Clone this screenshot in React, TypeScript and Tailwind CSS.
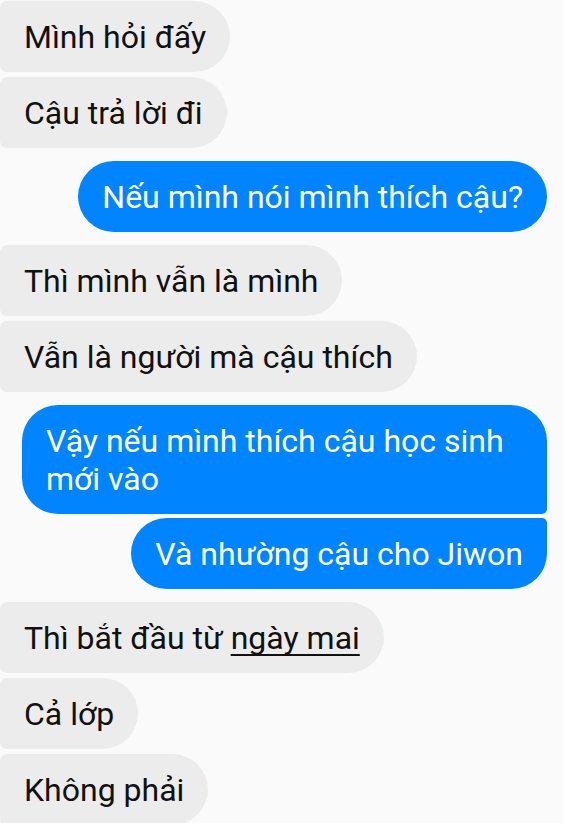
import React from "react";

const Gray = ({ children, mt }: { children: React.ReactNode; mt: string }) => (
  <div className={`flex justify-start ${mt}`}>
    <div className="bg-[#ececec] text-[#111] pl-6 pr-6 py-[16.5px] rounded-l-[7px] rounded-r-[36px]">
      {children}
    </div>
  </div>
);

const Blue = ({ children, mt, cls }: { children: React.ReactNode; mt: string; cls: string }) => (
  <div className={`flex justify-end pr-4 ${mt}`}>
    <div className={`bg-[#0084ff] text-white px-6 py-[16.5px] max-w-[525px] ${cls}`}>{children}</div>
  </div>
);

export default function App() {
  return (
    <div
      className="w-[563px] h-[823px] overflow-hidden bg-[#fafafa] pt-px text-[32px] leading-[38px]"
      style={{ fontFamily: "Roboto, 'Noto Sans', sans-serif" }}
    >
      <Gray mt="mt-0">Mình hỏi đấy</Gray>
      <Gray mt="mt-[5px]">Cậu trả lời đi</Gray>
      <Blue mt="mt-[13px]" cls="rounded-[36px]">Nếu mình nói mình thích cậu?</Blue>
      <Gray mt="mt-[13px]">Thì mình vẫn là mình</Gray>
      <Gray mt="mt-[5px]">Vẫn là người mà cậu thích</Gray>
      <Blue mt="mt-[13px]" cls="rounded-[36px] rounded-br-[5px]">Vậy nếu mình thích cậu học sinh mới vào</Blue>
      <Blue mt="mt-[4px]" cls="rounded-[36px] rounded-tr-[5px]">Và nhường cậu cho Jiwon</Blue>
      <Gray mt="mt-[13px]">
        Thì bắt đầu từ{" "}
        <span className="underline decoration-[2px] underline-offset-[5px] [text-decoration-skip-ink:none]">ngày mai</span>
      </Gray>
      <Gray mt="mt-[5px]">Cả lớp</Gray>
      <Gray mt="mt-[5px]">Không phải</Gray>
    </div>
  );
}
